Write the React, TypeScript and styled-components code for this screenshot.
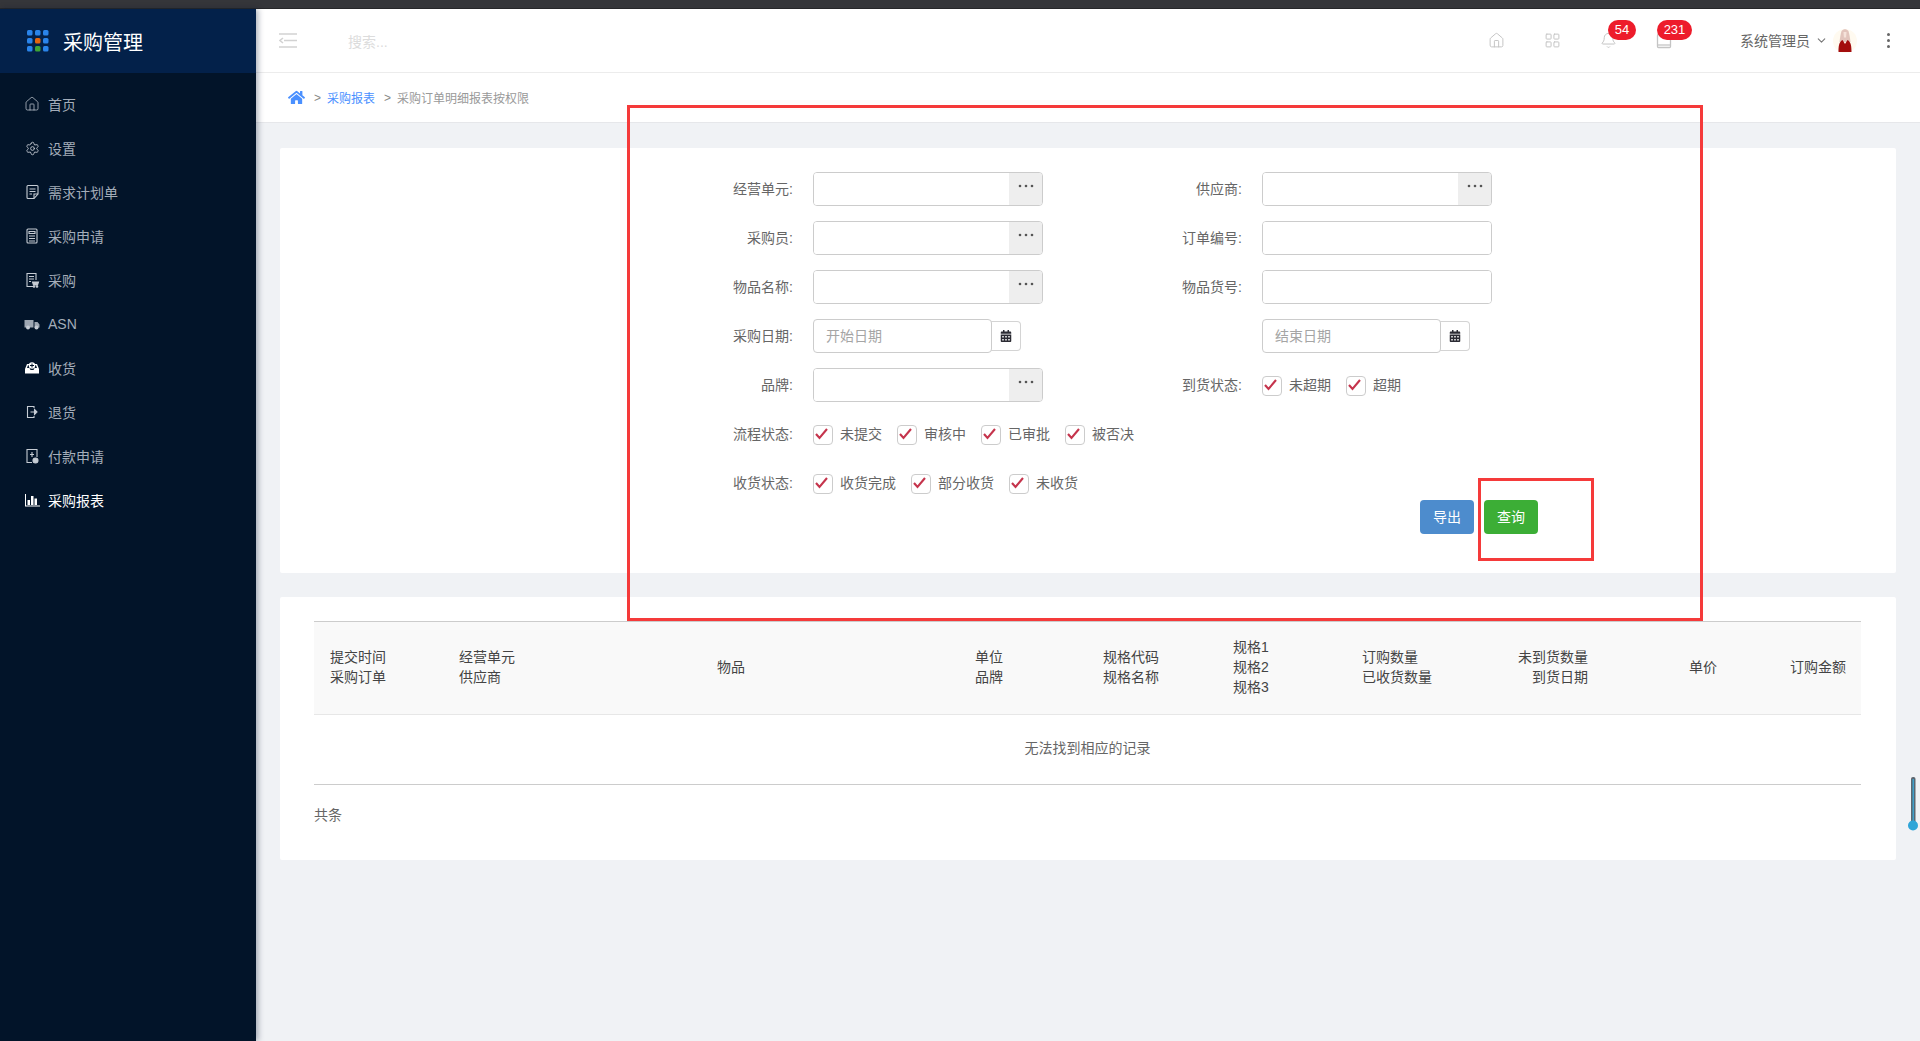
import React from 'react';
import styled, { createGlobalStyle } from 'styled-components';
import { Home, LayoutGrid, Bell, ChevronDown, Settings } from 'lucide-react';
import { FaHome, FaCalendarAlt } from 'react-icons/fa';

const GlobalStyle = createGlobalStyle`
  html, body {
    margin: 0;
    padding: 0;
    height: 100%;
    overflow: hidden;
    background: #f0f2f5;
    font-family: "Liberation Sans", "Noto Sans CJK SC", sans-serif;
    font-size: 14px;
    color: #666;
  }
  * { box-sizing: border-box; }
`;

const Page = styled.div`
  position: relative;
  width: 1920px;
  height: 1041px;
  overflow: hidden;
  display: flex;
  flex-direction: column;
`;

const WindowStrip = styled.div`
  height: 9px;
  flex: none;
  background: #35363a;
  border-bottom: 1px solid #26272a;
`;

const Body = styled.div`
  flex: 1;
  display: flex;
  min-height: 0;
`;

const Sidebar = styled.aside`
  width: 256px;
  flex: none;
  background: #021429;
  box-shadow: 2px 0 6px rgba(0, 20, 50, 0.35);
  position: relative;
  z-index: 2;
`;

const Brand = styled.div`
  height: 64px;
  background: #03214a;
  display: flex;
  align-items: center;
  padding-left: 27px;
  gap: 14px;
  color: #fff;
  font-size: 20px;
`;

const Nav = styled.nav`
  padding-top: 10px;
`;

const NavItem = styled.div<{ $active?: boolean }>`
  height: 44px;
  display: flex;
  align-items: center;
  gap: 8px;
  padding-left: 24px;
  padding-bottom: 2px;
  color: ${p => (p.$active ? '#fff' : '#a4adb9')};
`;

const NavIcon = styled.span`
  width: 16px;
  height: 16px;
  display: flex;
  align-items: center;
  justify-content: center;
  color: #c6ccd4;
`;

const Main = styled.main`
  flex: 1;
  min-width: 0;
  display: flex;
  flex-direction: column;
`;

const TopBar = styled.header`
  height: 64px;
  flex: none;
  background: #fff;
  display: flex;
  align-items: center;
  padding-left: 23px;
  border-bottom: 1px solid #ececec;
`;

const SearchHint = styled.span`
  margin-left: 51px;
  color: #dcdcdc;
`;

const TopRight = styled.div`
  margin-left: auto;
  display: flex;
  align-items: center;
`;

const TopIcon = styled.div`
  position: relative;
  width: 56px;
  height: 24px;
  display: flex;
  align-items: center;
  justify-content: center;
  color: #c4c4c4;
`;

const Badge = styled.span<{ $left: number; $width: number }>`
  position: absolute;
  top: -9px;
  left: ${p => p.$left}px;
  width: ${p => p.$width}px;
  height: 20px;
  border-radius: 10px;
  background: #ed1c2b;
  color: #fff;
  font-size: 13px;
  line-height: 20px;
  text-align: center;
`;

const UserName = styled.span`
  margin-left: 48px;
  padding-bottom: 1px;
  color: #666;
`;

const Chevron = styled.span`
  display: flex;
  margin: 0 5px 0 5px;
  color: #777;
`;

const Avatar = styled.span`
  width: 24px;
  height: 24px;
  display: flex;
`;

const MoreDots = styled.span`
  display: flex;
  flex-direction: column;
  gap: 3px;
  margin: 0 30px 0 30px;
  & > i {
    width: 3px;
    height: 3px;
    background: #666;
    border-radius: 50%;
  }
`;

const Breadcrumb = styled.div`
  height: 50px;
  flex: none;
  background: #fff;
  border-bottom: 1px solid #e6e7ea;
  display: flex;
  align-items: center;
  padding-left: 32px;
  font-size: 12px;
  color: #888;
`;

const Crumb = styled.span<{ $link?: boolean }>`
  color: ${p => (p.$link ? '#4a90ff' : '#999')};
`;

const CrumbSep = styled.span`
  margin: 0 6px 0 9px;
  color: #888;
`;

const Content = styled.div`
  flex: 1;
  padding: 25px 24px 0;
  display: flex;
  flex-direction: column;
  gap: 24px;
`;

const Card = styled.section`
  background: #fff;
  border-radius: 2px;
`;

const FilterCard = styled(Card)`
  height: 425px;
  padding: 24px 358px 0 0;
`;

const FormGrid = styled.div`
  display: grid;
  grid-template-columns: 449px 449px;
  grid-auto-rows: 34px;
  row-gap: 15px;
  margin-left: 403px;
`;

const Field = styled.div<{ $full?: boolean }>`
  display: flex;
  align-items: center;
  ${p => (p.$full ? 'grid-column: 1 / -1;' : '')}
`;

const Label = styled.label`
  width: 110px;
  margin-right: 20px;
  padding-bottom: 2px;
  text-align: right;
  color: #666;
  flex: none;
`;

const InputWrap = styled.div`
  width: 230px;
  height: 34px;
  display: flex;
  border: 1px solid #ccc;
  border-radius: 4px;
  overflow: hidden;
`;

const TextInput = styled.input`
  flex: 1;
  min-width: 0;
  border: none;
  outline: none;
  padding: 0 12px;
  font: inherit;
  background: #fff;
`;

const LookupButton = styled.span`
  width: 33px;
  flex: none;
  background: #eee;
  display: flex;
  align-items: center;
  justify-content: center;
  padding-bottom: 6px;
`;

const DateGroup = styled.div`
  display: flex;
  align-items: center;
`;

const DateInput = styled.input`
  width: 179px;
  height: 34px;
  border: 1px solid #ccc;
  border-radius: 4px;
  outline: none;
  padding: 0 12px;
  font: inherit;
  &::placeholder {
    color: #a5a5a5;
  }
`;

const DateAddon = styled.span`
  width: 30px;
  height: 30px;
  margin-left: -1px;
  border: 1px solid #d4d4d4;
  border-left: none;
  border-radius: 0 4px 4px 0;
  display: flex;
  align-items: center;
  justify-content: center;
  color: #2b2b33;
`;

const CheckGroup = styled.div`
  display: flex;
  align-items: center;
  gap: 15px;
`;

const CheckItem = styled.span`
  display: flex;
  align-items: center;
  gap: 7px;
  color: #666;
`;

const CheckBox = styled.span`
  width: 20px;
  height: 20px;
  margin-top: 2px;
  border: 1px solid #ccc;
  border-radius: 4px;
  display: flex;
  background: #fff;
`;

const CheckText = styled.span`
  padding-bottom: 2px;
`;

const ButtonRow = styled.div`
  display: flex;
  justify-content: flex-end;
  gap: 10px;
`;

const ActionButton = styled.button<{ $color: string }>`
  width: 54px;
  height: 34px;
  border: none;
  border-radius: 4px;
  background: ${p => p.$color};
  color: #fff;
  font: inherit;
  padding: 0 0 2px;
`;

const TableCard = styled(Card)`
  height: 263px;
  padding: 24px 35px 0 34px;
`;

const Table = styled.table`
  width: 1547px;
  table-layout: fixed;
  border-collapse: collapse;
  line-height: 20px;
`;

const HeadRow = styled.tr`
  height: 93px;
  background: #f9f9f9;
  border-top: 1px solid #ccc;
  border-bottom: 1px solid #e7e7e7;
`;

const HeadCell = styled.th<{ $right?: boolean }>`
  font-weight: 400;
  color: #444;
  padding: 0 15px 2px;
  text-align: ${p => (p.$right ? 'right' : 'left')};
  &:first-child {
    padding-left: 16px;
  }
`;

const EmptyCell = styled.td`
  height: 70px;
  padding-bottom: 4px;
  text-align: center;
  color: #666;
  border-bottom: 1px solid #ccc;
`;

const TableFooter = styled.div`
  margin-top: 19px;
  color: #666;
`;

const RedFrame = styled.div<{ $l: number; $t: number; $w: number; $h: number }>`
  position: absolute;
  left: ${p => p.$l}px;
  top: ${p => p.$t}px;
  width: ${p => p.$w}px;
  height: ${p => p.$h}px;
  border: 3px solid #f53a3a;
  pointer-events: none;
  z-index: 5;
`;

const ScrollMark = styled.svg`
  position: absolute;
  right: 2px;
  top: 776px;
  z-index: 5;
`;

const LogoMark = () => {
  const cells = ['#2a84ea', '#2a84ea', '#2a84ea', '#2a84ea', '#e5660f', '#2a84ea', '#2a84ea', '#3fa535', '#2a84ea'];
  return (
    <svg width="22" height="22" viewBox="0 0 22 22">
      {cells.map((c, i) => (
        <rect key={i} x={(i % 3) * 8} y={Math.floor(i / 3) * 8} width="5.5" height="5.5" rx="1.5" fill={c} />
      ))}
    </svg>
  );
};

const line = { fill: 'none', stroke: 'currentColor', strokeWidth: 1.1 };

const DocIcon = () => (
  <svg width="16" height="16" viewBox="0 0 16 16" {...line}>
    <path d="M4 1.5h9a1 1 0 0 1 1 1V10l-4 4.5H4a1 1 0 0 1-1-1v-11a1 1 0 0 1 1-1z" />
    <path d="M14 10h-4v4.5M5.5 5h6M5.5 7.5h6M5.5 10h2.5" />
  </svg>
);

const FormIcon = () => (
  <svg width="16" height="16" viewBox="0 0 16 16" {...line}>
    <rect x="3" y="1" width="10" height="14" rx="1" />
    <path d="M5 3.5h6v2H5zM5 8h6M5 10.5h6M5 13h6" />
  </svg>
);

const CartDocIcon = () => (
  <svg width="16" height="16" viewBox="0 0 16 16" {...line}>
    <path d="M9 14.5H3v-13h9V8M5 4.5h5M5 7h5M5 9.5h2" />
    <path d="M8.5 10h6l-1 3h-4z" fill="currentColor" />
    <circle cx="10" cy="14.5" r=".8" fill="currentColor" />
    <circle cx="13" cy="14.5" r=".8" fill="currentColor" />
  </svg>
);

const TruckIcon = () => (
  <svg width="16" height="16" viewBox="0 0 16 16" fill="currentColor">
    <path d="M.5 4h9v7.5H.5zM10.5 6h3L15.5 8.5v3h-5z" opacity=".8" />
    <circle cx="4" cy="11.5" r="2" />
    <circle cx="12.5" cy="11.5" r="2" />
  </svg>
);

const InboxIcon = () => (
  <svg width="16" height="16" viewBox="0 0 16 16" fill="#fff">
    <path d="M1 9l2-5h2.5v1.2H4L3 8h2.5l1 2h3l1-2H13l-1-2.8h-1.5V4H13l2 5v4.5H1z" />
    <circle cx="8" cy="5.5" r="3.2" />
    <path d="M8 3.5v4M6 5.5h4" stroke="#021429" strokeWidth="1" />
  </svg>
);

const ExitIcon = () => (
  <svg width="16" height="16" viewBox="0 0 16 16" {...line}>
    <path d="M10 4V2.5H3.500v11H10V12" />
    <path d="M6.5 8h5M10.5 5.5L13 8l-2.5 2.5z" fill="currentColor" />
  </svg>
);

const PayIcon = () => (
  <svg width="16" height="16" viewBox="0 0 16 16" {...line}>
    <path d="M8 14.5H3v-13h10V9" />
    <path d="M8 4v5M6 6.5h4" />
    <circle cx="11.5" cy="12.5" r="2.5" fill="currentColor" />
  </svg>
);

const ChartIcon = () => (
  <svg width="16" height="16" viewBox="0 0 16 16" fill="#fff">
    <path d="M1 2h1v11.5h14v1H1z" />
    <rect x="3.5" y="8" width="2.5" height="5" />
    <rect x="7" y="4" width="2.5" height="9" />
    <rect x="10.5" y="6.5" width="2.5" height="6.5" />
  </svg>
);

const CollapseIcon = () => (
  <svg width="18" height="15" viewBox="0 0 18 15" fill="none" stroke="#d2d2d2" strokeWidth="1.6">
    <path d="M0 1h18M5 7.5h13M0 14h18M4 5L1 7.5 4 10" />
  </svg>
);

const BoxIcon = () => (
  <svg width="16" height="16" viewBox="0 0 16 16" fill="none" stroke="currentColor" strokeWidth="1.3">
    <rect x="1.5" y="1.5" width="13" height="13" rx="1" />
    <path d="M1.5 12h13" />
  </svg>
);

const AvatarArt = () => (
  <svg width="24" height="24" viewBox="0 0 24 24">
    <circle cx="12" cy="12" r="12" fill="#fffaf0" />
    <path d="M8.5 2c2-2.500 5-2.500 7 0 1 3 1.500 7 2 11h-11c.5-4 1-8 2-11z" fill="#e2c4bc" />
    <path d="M10.5 3h3l-.4 5.500h-2.200z" fill="#f5e2da" />
    <path d="M5.500 23c0-6 .5-10 4-12l2.500 4 2.500-4c3.500 2 4 6 4 12z" fill="#a30d0d" />
  </svg>
);

const Dots = () => (
  <svg width="16" height="4" viewBox="0 0 16 4" fill="#555">
    <circle cx="2" cy="2" r="1.3" />
    <circle cx="8" cy="2" r="1.3" />
    <circle cx="14" cy="2" r="1.3" />
  </svg>
);

const Tick = () => (
  <svg width="18" height="18" viewBox="0 0 18 18" fill="none" stroke="#c5344c" strokeWidth="2.1">
    <path d="M2 8l3.5 4L13 3" />
  </svg>
);

const navItems: { label: string; icon: React.ReactNode; active?: boolean }[] = [
  { label: '首页', icon: <Home size={16} strokeWidth={1.1} /> },
  { label: '设置', icon: <Settings size={15} strokeWidth={1.4} /> },
  { label: '需求计划单', icon: <DocIcon /> },
  { label: '采购申请', icon: <FormIcon /> },
  { label: '采购', icon: <CartDocIcon /> },
  { label: 'ASN', icon: <TruckIcon /> },
  { label: '收货', icon: <InboxIcon /> },
  { label: '退货', icon: <ExitIcon /> },
  { label: '付款申请', icon: <PayIcon /> },
  { label: '采购报表', icon: <ChartIcon />, active: true },
];

const columnWidths = [130, 258, 258, 128, 130, 129, 123, 133, 129, 129];

const columns: { lines: string[]; right?: boolean }[] = [
  { lines: ['提交时间', '采购订单'] },
  { lines: ['经营单元', '供应商'] },
  { lines: ['物品'] },
  { lines: ['单位', '品牌'] },
  { lines: ['规格代码', '规格名称'] },
  { lines: ['规格1', '规格2', '规格3'] },
  { lines: ['订购数量', '已收货数量'] },
  { lines: ['未到货数量', '到货日期'], right: true },
  { lines: ['单价'], right: true },
  { lines: ['订购金额'], right: true },
];

const LookupField = ({ label }: { label: string }) => (
  <Field>
    <Label>{label}</Label>
    <InputWrap>
      <TextInput />
      <LookupButton>
        <Dots />
      </LookupButton>
    </InputWrap>
  </Field>
);

const PlainField = ({ label }: { label: string }) => (
  <Field>
    <Label>{label}</Label>
    <InputWrap>
      <TextInput />
    </InputWrap>
  </Field>
);

const DateField = ({ label, placeholder }: { label: string; placeholder: string }) => (
  <Field>
    <Label>{label}</Label>
    <DateGroup>
      <DateInput placeholder={placeholder} />
      <DateAddon>
        <FaCalendarAlt size={12} />
      </DateAddon>
    </DateGroup>
  </Field>
);

const CheckField = ({ label, options, full }: { label: string; options: string[]; full?: boolean }) => (
  <Field $full={full}>
    <Label>{label}</Label>
    <CheckGroup>
      {options.map(o => (
        <CheckItem key={o}>
          <CheckBox>
            <Tick />
          </CheckBox>
          <CheckText>{o}</CheckText>
        </CheckItem>
      ))}
    </CheckGroup>
  </Field>
);

const App: React.FC = () => {
  return (
    <Page>
      <GlobalStyle />
      <WindowStrip />
      <Body>
        <Sidebar>
          <Brand>
            <LogoMark />
            采购管理
          </Brand>
          <Nav>
            {navItems.map(item => (
              <NavItem key={item.label} $active={item.active}>
                <NavIcon>{item.icon}</NavIcon>
                {item.label}
              </NavItem>
            ))}
          </Nav>
        </Sidebar>
        <Main>
          <TopBar>
            <CollapseIcon />
            <SearchHint>搜索...</SearchHint>
            <TopRight>
              <TopIcon>
                <Home size={17} strokeWidth={1.4} />
              </TopIcon>
              <TopIcon>
                <LayoutGrid size={17} strokeWidth={1.4} />
              </TopIcon>
              <TopIcon>
                <Bell size={17} strokeWidth={1.4} />
                <Badge $left={28} $width={28}>54</Badge>
              </TopIcon>
              <TopIcon>
                <BoxIcon />
                <Badge $left={21} $width={35}>231</Badge>
              </TopIcon>
              <UserName>系统管理员</UserName>
              <Chevron>
                <ChevronDown size={13} />
              </Chevron>
              <Avatar>
                <AvatarArt />
              </Avatar>
              <MoreDots>
                <i />
                <i />
                <i />
              </MoreDots>
            </TopRight>
          </TopBar>
          <Breadcrumb>
            <FaHome size={17} color="#4a90ff" />
            <CrumbSep>&gt;</CrumbSep>
            <Crumb $link>采购报表</Crumb>
            <CrumbSep>&gt;</CrumbSep>
            <Crumb>采购订单明细报表按权限</Crumb>
          </Breadcrumb>
          <Content>
            <FilterCard>
              <FormGrid>
                <LookupField label="经营单元:" />
                <LookupField label="供应商:" />
                <LookupField label="采购员:" />
                <PlainField label="订单编号:" />
                <LookupField label="物品名称:" />
                <PlainField label="物品货号:" />
                <DateField label="采购日期:" placeholder="开始日期" />
                <DateField label="" placeholder="结束日期" />
                <LookupField label="品牌:" />
                <CheckField label="到货状态:" options={['未超期', '超期']} />
                <CheckField full label="流程状态:" options={['未提交', '审核中', '已审批', '被否决']} />
                <CheckField full label="收货状态:" options={['收货完成', '部分收货', '未收货']} />
              </FormGrid>
              <ButtonRow>
                <ActionButton $color="#4d8ccd">导出</ActionButton>
                <ActionButton $color="#3cae36">查询</ActionButton>
              </ButtonRow>
            </FilterCard>
            <TableCard>
              <Table>
                <colgroup>
                  {columnWidths.map((w, i) => (
                    <col key={i} style={{ width: w }} />
                  ))}
                </colgroup>
                <thead>
                  <HeadRow>
                    {columns.map(col => (
                      <HeadCell key={col.lines[0]} $right={col.right}>
                        {col.lines.map(l => (
                          <div key={l}>{l}</div>
                        ))}
                      </HeadCell>
                    ))}
                  </HeadRow>
                </thead>
                <tbody>
                  <tr>
                    <EmptyCell colSpan={10}>无法找到相应的记录</EmptyCell>
                  </tr>
                </tbody>
              </Table>
              <TableFooter>共条</TableFooter>
            </TableCard>
          </Content>
        </Main>
      </Body>
      <RedFrame $l={627} $t={105} $w={1076} $h={516} />
      <RedFrame $l={1478} $t={478} $w={116} $h={83} />
      <ScrollMark width="10" height="56" viewBox="0 0 10 56">
        <rect x="3" y="1" width="4.5" height="48" rx="2" fill="#5b6670" />
        <rect x="4.5" y="3" width="1.5" height="44" fill="#3f9fca" />
        <circle cx="5" cy="49.5" r="5" fill="#2fa5d8" />
      </ScrollMark>
    </Page>
  );
};

export default App;
